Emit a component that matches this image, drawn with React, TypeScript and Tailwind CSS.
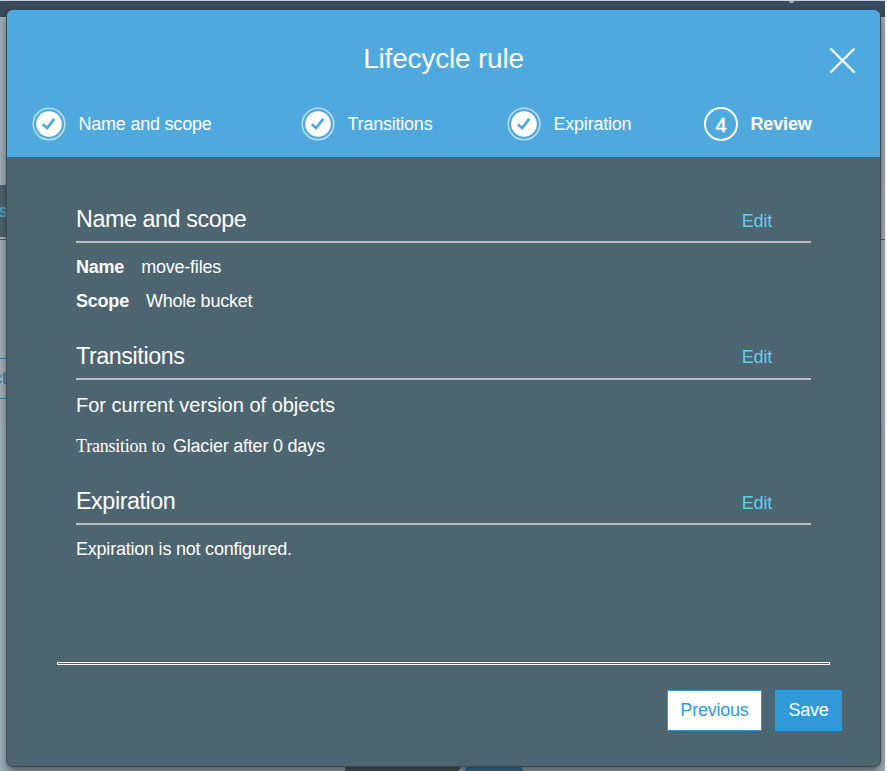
import type { ReactNode } from "react";

function DoneIcon() {
  return (
    <svg width="34" height="34" viewBox="0 0 34 34" fill="none" className="shrink-0">
      <circle cx="17" cy="17" r="15.8" stroke="#b9def3" strokeWidth="1.6" />
      <circle cx="17" cy="17" r="12.8" fill="#fff" />
      <path d="M10.8 17.2 L15.1 21 L22.3 11.8" stroke="#4fa9de" strokeWidth="2.7" />
    </svg>
  );
}

function CurrentIcon() {
  return (
    <span className="flex h-[34px] w-[34px] shrink-0 items-center justify-center rounded-full border-2 border-white text-[20px] leading-none text-white">
      <span className="pt-px font-normal [-webkit-text-stroke:0.5px_white]">4</span>
    </span>
  );
}

function Step({ label, className }: { label: string; className: string }) {
  return (
    <li className={`flex items-center gap-[12.5px] ${className}`}>
      <DoneIcon />
      <span>{label}</span>
    </li>
  );
}

function SectionHeading({ children, linkClass }: { children: ReactNode; linkClass: string }) {
  return (
    <div className="flex h-[39px] items-end justify-between border-b-2 border-[#bfbfbf] pr-[39px]">
      <h2 className="pb-[8px] text-[23.3px] leading-[27px] tracking-[-0.42px]">{children}</h2>
      <a className={`text-[18px] leading-[21px] tracking-[-0.2px] text-[#64cdea] ${linkClass}`}>Edit</a>
    </div>
  );
}

export default function App() {
  return (
    <div className="relative h-[771px] w-[887px] overflow-hidden bg-white font-['Liberation_Sans',Arial,sans-serif]">
      {/* Dimmed page behind the dialog */}
      <div className="flex h-full w-[885px] flex-col bg-[#9fb0bb]">
        <div className="flex h-[17px] shrink-0 justify-end border-t border-[#c3cfe4] bg-[#3a4b59] pr-[91px]">
          <span className="h-[2px] w-[5px] rounded-b-full bg-[#a5aeb5]" />
        </div>
        <div className="h-[168px] shrink-0 bg-[#a1adb6]" />
        <div className="h-[52px] w-10 shrink-0 bg-[#4d6571] pt-[16px] text-[18px] leading-[21px] font-bold text-[#56a5bf]">
          <span className="-ml-[2px]">s</span>
        </div>
        <div className="h-[3px] shrink-0 border-b border-[#4d5d6b] bg-[#a5b1ba]" />
        <div className="flex h-[184px] shrink-0 flex-col bg-[#a5b1ba] pt-[118px]">
          <div className="h-[41px] w-10 border-y border-[#377da9] pt-[9px] text-[18px] leading-[21px] text-[#377da9]">
            <span className="-ml-[7px]">ct</span>
          </div>
        </div>
        <div className="flex flex-1 items-end">
          <svg width="885" height="8" viewBox="0 0 885 8">
            <path d="M345 0H464L458 8H345Z" fill="#535a60" />
            <path d="M464 8Q467 2 475 0H515Q520 2 524 8Z" fill="#3d7da7" />
          </svg>
        </div>
      </div>

      {/* Dialog laid over the page */}
      <div className="absolute top-[10px] left-[7px] flex h-[756px] w-[873px] flex-col overflow-hidden rounded-[6px] bg-[#4d6571] text-[18px] leading-[21px] tracking-[-0.22px] text-white shadow-[0_0_0_1px_#3e4a53,0_5px_10px_rgba(0,0,0,0.55)]">
        <header className="h-[147px] shrink-0 bg-[#4fa9de]">
          <div className="relative flex h-[97px] justify-center pt-8">
            <h1 className="text-[28px] leading-[33px] tracking-[-0.2px]">Lifecycle rule</h1>
            <svg className="absolute top-[37px] right-[24px]" width="27" height="27" viewBox="0 0 27 27" fill="none" stroke="#fff" strokeWidth="2.4">
              <path d="M1.5 1.5 L25.5 25.5 M25.5 1.5 L1.5 25.5" />
            </svg>
          </div>
          <ol className="flex h-[34px] pl-[25px]">
            <Step label="Name and scope" className="w-[269px]" />
            <Step label="Transitions" className="w-[206px]" />
            <Step label="Expiration" className="w-[197px]" />
            <li className="flex items-center gap-[12.5px] font-bold tracking-[-0.15px]">
              <CurrentIcon />
              <span>Review</span>
            </li>
          </ol>
        </header>

        <main className="h-[505px] shrink-0 pr-[69px] pl-[69px] pt-[47px]">
          <SectionHeading linkClass="pb-[9px]">Name and scope</SectionHeading>
          <p className="mt-[14px] flex gap-[17px]"><b>Name</b><span>move-files</span></p>
          <p className="mt-[13px] mb-[29px] flex gap-[17px]"><b>Scope</b><span>Whole bucket</span></p>
          <SectionHeading linkClass="pb-[10px]">Transitions</SectionHeading>
          <h3 className="mt-[13px] text-[20px] leading-6 tracking-normal">For current version of objects</h3>
          <p className="mt-[19px] mb-[29px] flex gap-[8px]">
            <span className="font-['Liberation_Serif','Times_New_Roman',serif]">Transition to</span>
            <span>Glacier after 0 days</span>
          </p>
          <SectionHeading linkClass="pb-[9px]">Expiration</SectionHeading>
          <p className="mt-[14px]">Expiration is not configured.</p>
        </main>

        <div className="ml-[50px] h-[3px] w-[773px] shrink-0 border border-white" />
        <footer className="mt-[25px] flex justify-end gap-[13px] pr-[38px]">
          <button className="h-[41px] w-[95px] border border-[#3299d9] bg-white text-[#3299d9]">Previous</button>
          <button className="h-[41px] w-[67px] bg-[#3299d9]">Save</button>
        </footer>
      </div>
    </div>
  );
}
